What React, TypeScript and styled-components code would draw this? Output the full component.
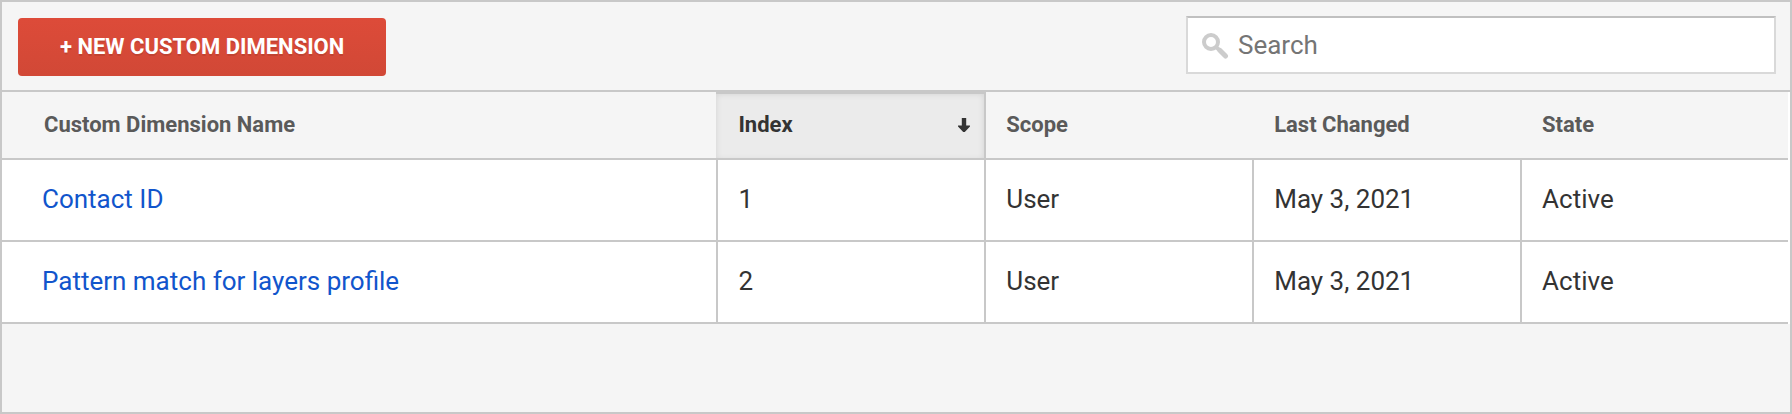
import React, { useState } from "react";
import styled, { createGlobalStyle, css } from "styled-components";

const line = "#c8c8c8";

const GlobalStyle = createGlobalStyle`
  *, *::before, *::after { box-sizing: border-box; }
  body {
    margin: 0;
    background: #f5f5f5;
    color: #333;
    font-family: Roboto, "Liberation Sans", sans-serif;
    font-size: 26px;
  }
`;

const Panel = styled.main`
  display: flex;
  flex-direction: column;
  min-height: 100vh;
  border: 2px solid ${line};
  background: #f5f5f5;
`;

const Toolbar = styled.div`
  display: flex;
  align-items: flex-start;
  justify-content: space-between;
  gap: 24px;
  padding: 14px 14px 14px 16px;
  border-bottom: 2px solid ${line};
`;

const CreateButton = styled.button`
  height: 58px;
  margin-top: 2px;
  padding: 0 42px;
  border: 0;
  border-radius: 4px;
  background: linear-gradient(#dd4b39, #d14836);
  color: #fff;
  font: 700 22px/58px Roboto, "Liberation Sans", sans-serif;
  text-shadow: 0 2px rgba(0, 0, 0, 0.1);
  white-space: nowrap;
  cursor: pointer;
`;

const SearchBox = styled.label`
  display: flex;
  align-items: center;
  gap: 8px;
  width: 590px;
  height: 58px;
  padding: 0 14px;
  border: 2px solid #d9d9d9;
  border-top-color: #c0c0c0;
  background: #fff;
`;

const SearchInput = styled.input`
  flex: 1;
  min-width: 0;
  padding: 0;
  border: 0;
  outline: 0;
  background: transparent;
  color: #333;
  font: 400 26px/32px Roboto, "Liberation Sans", sans-serif;

  &::placeholder { color: #757575; opacity: 1; }
`;

const TableArea = styled.div`
  padding-right: 2px;
  background: #fff;
`;

const Table = styled.table`
  width: 100%;
  table-layout: fixed;
  border-collapse: separate;
  border-spacing: 0;
`;

const Column = styled.col<{ $wide?: boolean }>`
  width: ${(p) => (p.$wide ? "40%" : "15%")};
`;

const HeaderCell = styled.th<{ $sorted?: boolean; $afterSorted?: boolean }>`
  height: 68px;
  padding: 0 20px 0 ${(p) => (p.$afterSorted ? "20px" : "22px")};
  border-left: ${(p) => (p.$afterSorted ? `2px solid ${line}` : "0")};
  border-bottom: 2px solid ${line};
  background: #f5f5f5;
  color: #5a5a5a;
  font-size: 22px;
  font-weight: 700;
  line-height: 30px;
  text-align: left;

  &:first-child { padding-left: 42px; }

  ${(p) =>
    p.$sorted &&
    css`
      padding-right: 14px;
      background: #ebebeb;
      box-shadow: inset 0 2px ${line}, inset 0 2px 6px rgba(0, 0, 0, 0.1);
      color: #333;
    `}
`;

const SortButton = styled.button`
  display: flex;
  align-items: center;
  justify-content: space-between;
  width: 100%;
  padding: 0;
  border: 0;
  background: none;
  color: inherit;
  font: inherit;
  cursor: pointer;
`;

const Cell = styled.td`
  height: 82px;
  padding: 0 20px 2px;
  border-left: 2px solid ${line};
  border-bottom: 2px solid ${line};
  background: #fff;
  line-height: 32px;

  &:first-child { padding-left: 40px; border-left: 0; }
`;

const NameLink = styled.a`
  color: #1155cc;
  text-decoration: none;
`;

const SearchIcon = () => (
  <svg width="28" height="28" viewBox="0 0 28 28" fill="none" stroke="#cccccc" aria-hidden="true">
    <circle cx="9" cy="11" r="7" strokeWidth="4" />
    <path d="M14.5 16.5 L18 19.5" strokeWidth="4" />
    <path d="M18 19.5 L23.5 25" strokeWidth="5" strokeLinecap="round" />
  </svg>
);

const SortArrow = () => (
  <svg width="12" height="16" viewBox="0 0 12 16" fill="#333" aria-hidden="true">
    <path d="M3.8 1h4.4v7.5H12v1L6.8 15H5.2L0 9.5v-1h3.8z" />
  </svg>
);

const dimensions = [
  { name: "Contact ID", index: 1, scope: "User", changed: "May 3, 2021", state: "Active" },
  { name: "Pattern match for layers profile", index: 2, scope: "User", changed: "May 3, 2021", state: "Active" },
];

export default function App() {
  const [query, setQuery] = useState("");
  const rows = dimensions.filter((d) => d.name.toLowerCase().includes(query.toLowerCase()));

  return (
    <>
      <GlobalStyle />
      <Panel>
        <Toolbar>
          <CreateButton type="button">+ NEW CUSTOM DIMENSION</CreateButton>
          <SearchBox>
            <SearchIcon />
            <SearchInput
              type="text"
              aria-label="Search"
              placeholder="Search"
              value={query}
              onChange={(e) => setQuery(e.target.value)}
            />
          </SearchBox>
        </Toolbar>
        <TableArea>
          <Table>
            <colgroup>
              <Column $wide />
              <Column />
              <Column />
              <Column />
              <Column />
            </colgroup>
            <thead>
              <tr>
                <HeaderCell scope="col">Custom Dimension Name</HeaderCell>
                <HeaderCell scope="col" $sorted aria-sort="ascending">
                  <SortButton type="button">
                    Index
                    <SortArrow />
                  </SortButton>
                </HeaderCell>
                <HeaderCell scope="col" $afterSorted>Scope</HeaderCell>
                <HeaderCell scope="col">Last Changed</HeaderCell>
                <HeaderCell scope="col">State</HeaderCell>
              </tr>
            </thead>
            <tbody>
              {rows.map((d) => (
                <tr key={d.index}>
                  <Cell><NameLink href="#">{d.name}</NameLink></Cell>
                  <Cell>{d.index}</Cell>
                  <Cell>{d.scope}</Cell>
                  <Cell>{d.changed}</Cell>
                  <Cell>{d.state}</Cell>
                </tr>
              ))}
            </tbody>
          </Table>
        </TableArea>
      </Panel>
    </>
  );
}
